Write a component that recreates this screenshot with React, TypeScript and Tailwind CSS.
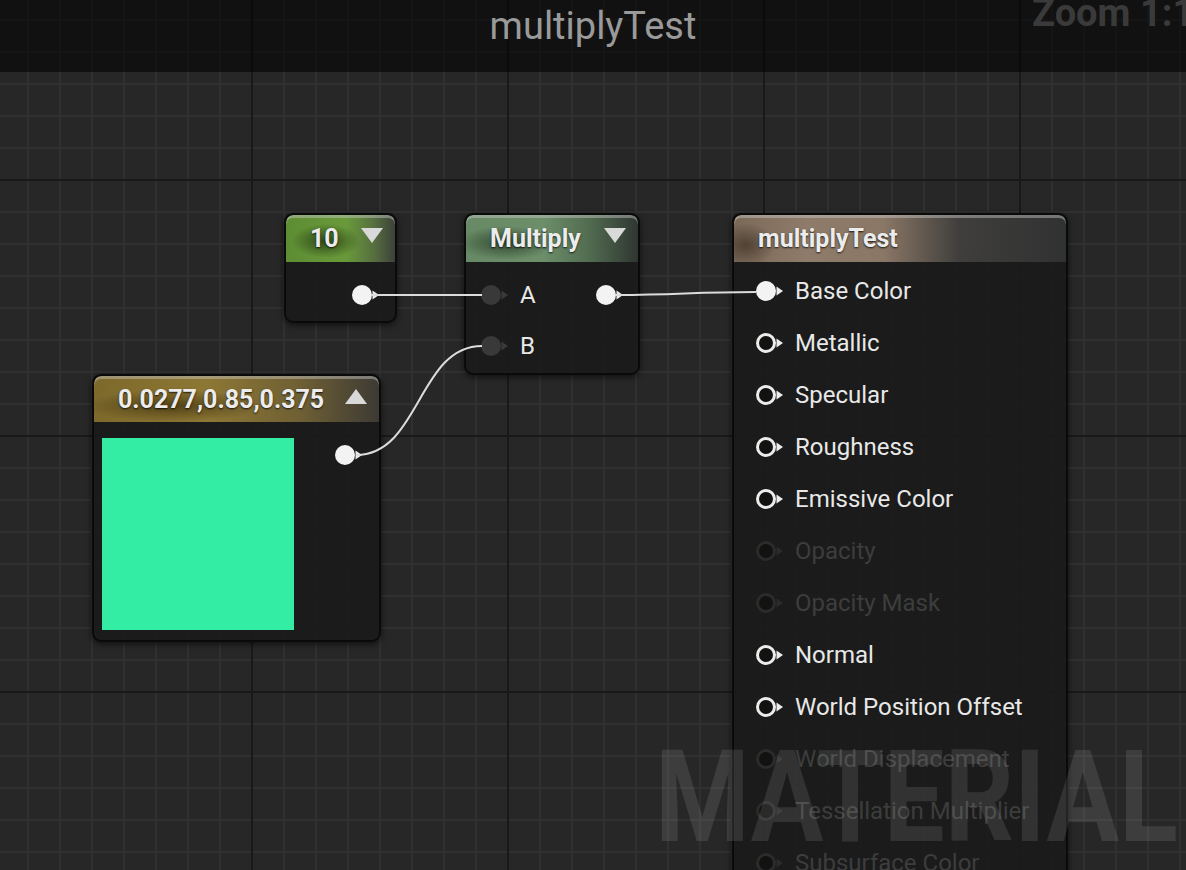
import type { ReactNode } from "react";

type PinKind = "filled" | "ring" | "dim" | "gray";

function Pin({ kind }: { kind: PinKind }) {
  const stroke = kind === "dim" ? "#2b2b2b" : kind === "gray" ? "#3a3a3a" : "#ececec";
  return (
    <svg width="28" height="22" viewBox="0 0 28 22" className="shrink-0">
      {kind === "filled" && <circle cx="10" cy="11" r="10" fill="#f3f3f3" />}
      {kind === "gray" && <circle cx="10" cy="11" r="10" fill="#393939" />}
      {(kind === "ring" || kind === "dim") && (
        <circle cx="10" cy="11" r="8.5" fill="#121311" stroke={stroke} strokeWidth="3" />
      )}
      <polygon points="20.5,6.5 27,11 20.5,15.5" fill={stroke} />
    </svg>
  );
}

function Caret({ up = false }: { up?: boolean }) {
  return (
    <svg width="22" height="15" viewBox="0 0 22 15" className="shrink-0">
      <polygon points={up ? "0,15 22,15 11,0" : "0,0 22,0 11,15"} fill="#d9d9d9" />
    </svg>
  );
}

function Node({
  className,
  headerClass,
  title,
  caret,
  children,
}: {
  className: string;
  headerClass: string;
  title: string;
  caret?: "up" | "down";
  children: ReactNode;
}) {
  return (
    <div
      className={`absolute rounded-[9px] border-2 border-[#0a0a0a] bg-[#1a1b19]/90 shadow-[0_2px_6px_rgba(0,0,0,0.6)] overflow-hidden ${className}`}
    >
      <div
        className={`flex items-center gap-[14px] pl-[24px] pr-[12px] shadow-[inset_0_3px_0_rgba(200,200,200,0.45)] rounded-t-[7px] ${headerClass}`}
      >
        <span className="text-[25px] font-bold text-[#ececec] leading-none [text-shadow:0_1px_2px_rgba(0,0,0,0.8)] whitespace-nowrap">
          {title}
        </span>
        {caret && (
          <span className="ml-auto -mt-[6px]">
            <Caret up={caret === "up"} />
          </span>
        )}
      </div>
      {children}
    </div>
  );
}

const materialInputs: { label: string; kind: PinKind }[] = [
  { label: "Base Color", kind: "filled" },
  { label: "Metallic", kind: "ring" },
  { label: "Specular", kind: "ring" },
  { label: "Roughness", kind: "ring" },
  { label: "Emissive Color", kind: "ring" },
  { label: "Opacity", kind: "dim" },
  { label: "Opacity Mask", kind: "dim" },
  { label: "Normal", kind: "ring" },
  { label: "World Position Offset", kind: "ring" },
  { label: "World Displacement", kind: "dim" },
  { label: "Tessellation Multiplier", kind: "dim" },
  { label: "Subsurface Color", kind: "dim" },
];

export default function App() {
  return (
    <div className="relative w-[1186px] h-[870px] overflow-hidden bg-[#272727] [font-family:Roboto,'Liberation_Sans',sans-serif]">
      {/* grid */}
      <div className="absolute inset-0 bg-[linear-gradient(to_right,#303030_2px,transparent_2px),linear-gradient(to_bottom,#303030_2px,transparent_2px)] [background-size:32px_32px] [background-position:27px_19px]" />
      <div className="absolute inset-0 bg-[linear-gradient(to_right,#191919_2px,transparent_2px),linear-gradient(to_bottom,#191919_2px,transparent_2px)] [background-size:256px_256px] [background-position:251px_179px]" />

      {/* title band */}
      <div className="absolute left-0 right-0 top-0 h-[72px] bg-black/55 flex justify-center">
        <span className="mt-[4px] text-[38px] text-[#9a9a9a] leading-[44px]">multiplyTest</span>
      </div>
      <span className="absolute left-[1032px] -top-[9px] text-[38px] font-bold text-[#3a3a3a] leading-[44px] whitespace-nowrap">
        Zoom 1:1
      </span>

      {/* constant */}
      <Node
        className="left-[284px] top-[213px] w-[113px] h-[110px]"
        headerClass="h-[47px] bg-[radial-gradient(ellipse_34px_17px_at_40px_26px,rgba(30,50,15,0.8),transparent),linear-gradient(to_right,#5d8c33_0%,#699a3a_55%,#57703f_80%,#3d413a_100%)]"
        title="10"
        caret="down"
      >
        <div className="flex justify-end items-center h-[52px] mt-[7px] pr-[15px]">
          <Pin kind="filled" />
        </div>
      </Node>

      {/* multiply */}
      <Node
        className="left-[464px] top-[213px] w-[176px] h-[162px]"
        headerClass="h-[47px] bg-[radial-gradient(ellipse_48px_17px_at_40px_28px,rgba(30,50,30,0.75),transparent),linear-gradient(to_right,#678965_0%,#6c8e69_45%,#516b50_72%,#2f3631_100%)]"
        title="Multiply"
        caret="down"
      >
        <div className="flex flex-col pt-[7px]">
          <div className="flex items-center h-[51px] pl-[15px] pr-[14px] gap-[11px]">
            <Pin kind="gray" />
            <span className="text-[24px] text-[#e8e8e8]">A</span>
            <span className="ml-auto">
              <Pin kind="filled" />
            </span>
          </div>
          <div className="flex items-center h-[51px] pl-[15px] gap-[11px]">
            <Pin kind="gray" />
            <span className="text-[24px] text-[#e8e8e8]">B</span>
          </div>
        </div>
      </Node>

      {/* vector constant */}
      <Node
        className="left-[92px] top-[374px] w-[289px] h-[268px]"
        headerClass="h-[46px] bg-[radial-gradient(ellipse_90px_16px_at_80px_30px,rgba(45,32,5,0.6),transparent),linear-gradient(to_right,#7d692b_0%,#8d7734_40%,#6f6034_72%,#3d3a34_100%)]"
        title="0.0277,0.85,0.375"
        caret="up"
      >
        <div className="flex pt-[16px] pl-[8px] gap-[41px]">
          <div className="w-[192px] h-[192px] bg-[#34eda5] shrink-0" />
          <div className="mt-[6px]">
            <Pin kind="filled" />
          </div>
        </div>
      </Node>

      {/* material result */}
      <Node
        className="left-[732px] top-[213px] w-[336px] h-[720px]"
        headerClass="h-[47px] bg-[radial-gradient(ellipse_30px_22px_at_12px_30px,rgba(40,30,22,0.55),transparent),linear-gradient(to_right,#7b6957_0%,#8f7b69_22%,#8a7766_45%,#3f3e3c_68%,#303131_100%)]"
        title="multiplyTest"
      >
        <div className="flex flex-col pt-[3px]">
          {materialInputs.map((row) => (
            <div key={row.label} className="flex items-center h-[52px] pl-[22px] gap-[11px]">
              <Pin kind={row.kind} />
              <span
                className={`text-[24px] whitespace-nowrap ${row.kind === "dim" ? "text-[#3d3d3d]" : "text-[#e8e8e8]"}`}
              >
                {row.label}
              </span>
            </div>
          ))}
        </div>
      </Node>

      {/* wires */}
      <svg className="absolute inset-0 pointer-events-none" width="1186" height="870">
        <g fill="none" stroke="#dcdcdc" strokeWidth="2">
          <path d="M372 295 L482 295" />
          <path d="M616 295 C680 295 690 292 756 292" />
          <path d="M356 455 C420 455 418 346 482 346" />
        </g>
      </svg>

      {/* watermark */}
      <span className="absolute left-[655px] top-[722px] text-[128px] font-bold leading-[150px] text-white/10 whitespace-nowrap origin-left scale-x-[0.845] pointer-events-none">
        MATERIAL
      </span>
    </div>
  );
}
